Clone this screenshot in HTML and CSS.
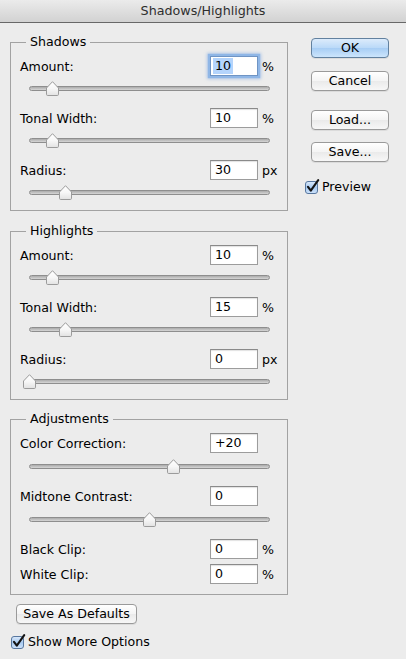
FILE: index.html
```html
<!DOCTYPE html>
<html>
<head>
<meta charset="utf-8">
<title>Shadows/Highlights</title>
<link rel="stylesheet" href="styles.css">
</head>
<body>
<svg class="defs" width="0" height="0" aria-hidden="true">
  <defs>
    <linearGradient id="thumbGrad" x1="0" y1="0" x2="0" y2="1">
      <stop offset="0" stop-color="#ffffff"/>
      <stop offset="0.5" stop-color="#f7f7f7"/>
      <stop offset="1" stop-color="#e2e2e2"/>
    </linearGradient>
    <linearGradient id="checkGrad" x1="0" y1="0" x2="0" y2="1">
      <stop offset="0" stop-color="#dbe9fa"/>
      <stop offset="0.5" stop-color="#a9cbf1"/>
      <stop offset="1" stop-color="#cfe3fb"/>
    </linearGradient>
  </defs>
</svg>
<div class="window">
  <div class="titlebar">Shadows/Highlights</div>
  <div class="content">
    <div class="left">
      <fieldset class="group g-shadows">
        <legend>Shadows</legend>
        <div class="setting">
          <div class="field-row"><span class="label">Amount:</span><span class="input focus"><span class="sel">10</span></span><span class="unit">%</span></div>
          <div class="slider"><div class="track"></div><svg class="thumb" style="left:17px" width="13" height="15" viewBox="0 0 13 15"><path d="M0.5 7 L6.5 0.7 L12.5 7 V13.3 Q12.5 14.5 11.3 14.5 H1.7 Q0.5 14.5 0.5 13.3 Z" fill="url(#thumbGrad)" stroke="#9b9b9b"/></svg></div>
        </div>
        <div class="setting">
          <div class="field-row"><span class="label">Tonal Width:</span><span class="input">10</span><span class="unit">%</span></div>
          <div class="slider"><div class="track"></div><svg class="thumb" style="left:17px" width="13" height="15" viewBox="0 0 13 15"><path d="M0.5 7 L6.5 0.7 L12.5 7 V13.3 Q12.5 14.5 11.3 14.5 H1.7 Q0.5 14.5 0.5 13.3 Z" fill="url(#thumbGrad)" stroke="#9b9b9b"/></svg></div>
        </div>
        <div class="setting">
          <div class="field-row"><span class="label">Radius:</span><span class="input">30</span><span class="unit">px</span></div>
          <div class="slider"><div class="track"></div><svg class="thumb" style="left:30px" width="13" height="15" viewBox="0 0 13 15"><path d="M0.5 7 L6.5 0.7 L12.5 7 V13.3 Q12.5 14.5 11.3 14.5 H1.7 Q0.5 14.5 0.5 13.3 Z" fill="url(#thumbGrad)" stroke="#9b9b9b"/></svg></div>
        </div>
      </fieldset>

      <fieldset class="group g-highlights">
        <legend>Highlights</legend>
        <div class="setting">
          <div class="field-row"><span class="label">Amount:</span><span class="input">10</span><span class="unit">%</span></div>
          <div class="slider"><div class="track"></div><svg class="thumb" style="left:17px" width="13" height="15" viewBox="0 0 13 15"><path d="M0.5 7 L6.5 0.7 L12.5 7 V13.3 Q12.5 14.5 11.3 14.5 H1.7 Q0.5 14.5 0.5 13.3 Z" fill="url(#thumbGrad)" stroke="#9b9b9b"/></svg></div>
        </div>
        <div class="setting">
          <div class="field-row"><span class="label">Tonal Width:</span><span class="input">15</span><span class="unit">%</span></div>
          <div class="slider"><div class="track"></div><svg class="thumb" style="left:30px" width="13" height="15" viewBox="0 0 13 15"><path d="M0.5 7 L6.5 0.7 L12.5 7 V13.3 Q12.5 14.5 11.3 14.5 H1.7 Q0.5 14.5 0.5 13.3 Z" fill="url(#thumbGrad)" stroke="#9b9b9b"/></svg></div>
        </div>
        <div class="setting">
          <div class="field-row"><span class="label">Radius:</span><span class="input">0</span><span class="unit">px</span></div>
          <div class="slider"><div class="track"></div><svg class="thumb" style="left:-6px" width="13" height="15" viewBox="0 0 13 15"><path d="M0.5 7 L6.5 0.7 L12.5 7 V13.3 Q12.5 14.5 11.3 14.5 H1.7 Q0.5 14.5 0.5 13.3 Z" fill="url(#thumbGrad)" stroke="#9b9b9b"/></svg></div>
        </div>
      </fieldset>

      <fieldset class="group g-adjust">
        <legend>Adjustments</legend>
        <div class="setting">
          <div class="field-row"><span class="label">Color Correction:</span><span class="input">+20</span></div>
          <div class="slider"><div class="track"></div><svg class="thumb" style="left:138px" width="13" height="15" viewBox="0 0 13 15"><path d="M0.5 7 L6.5 0.7 L12.5 7 V13.3 Q12.5 14.5 11.3 14.5 H1.7 Q0.5 14.5 0.5 13.3 Z" fill="url(#thumbGrad)" stroke="#9b9b9b"/></svg></div>
        </div>
        <div class="setting">
          <div class="field-row"><span class="label">Midtone Contrast:</span><span class="input">0</span></div>
          <div class="slider"><div class="track"></div><svg class="thumb" style="left:114px" width="13" height="15" viewBox="0 0 13 15"><path d="M0.5 7 L6.5 0.7 L12.5 7 V13.3 Q12.5 14.5 11.3 14.5 H1.7 Q0.5 14.5 0.5 13.3 Z" fill="url(#thumbGrad)" stroke="#9b9b9b"/></svg></div>
        </div>
        <div class="clips">
          <div class="field-row"><span class="label">Black Clip:</span><span class="input">0</span><span class="unit">%</span></div>
          <div class="field-row"><span class="label">White Clip:</span><span class="input">0</span><span class="unit">%</span></div>
        </div>
      </fieldset>

      <button class="btn wide">Save As Defaults</button>
      <div class="check more">
        <svg width="15" height="15" viewBox="0 0 15 15"><rect x="0.5" y="2.5" width="12" height="12" rx="2.5" fill="url(#checkGrad)" stroke="#58779f"/><path d="M3 7.8 L5.8 11.6 L13.2 1.2" fill="none" stroke="#141414" stroke-width="2.1" stroke-linecap="round" stroke-linejoin="round"/></svg>
        <span>Show More Options</span>
      </div>
    </div>

    <div class="right">
      <button class="btn default">OK</button>
      <button class="btn b-cancel">Cancel</button>
      <button class="btn b-load">Load...</button>
      <button class="btn b-save">Save...</button>
      <div class="check preview">
        <svg width="15" height="15" viewBox="0 0 15 15"><rect x="0.5" y="2.5" width="12" height="12" rx="2.5" fill="url(#checkGrad)" stroke="#58779f"/><path d="M3 7.8 L5.8 11.6 L13.2 1.2" fill="none" stroke="#141414" stroke-width="2.1" stroke-linecap="round" stroke-linejoin="round"/></svg>
        <span>Preview</span>
      </div>
    </div>
  </div>
</div>
</body>
</html>
```
FILE: styles.css
```css
* { box-sizing: border-box; }
html, body { margin: 0; padding: 0; }
body {
  width: 406px;
  height: 659px;
  overflow: hidden;
  background: #ececec;
  font-family: "DejaVu Sans", "Noto Sans", sans-serif;
  font-size: 12.6px;
  color: #000;
}
.defs { display: block; width: 0; height: 0; }

.window { height: 659px; display: flex; flex-direction: column; }

.titlebar {
  height: 23px;
  line-height: 22px;
  text-align: center;
  color: #2e2e2e;
  font-size: 12.7px;
  background: linear-gradient(#ebebeb, #d2d2d2);
  border-bottom: 1px solid #686868;
}

.content { display: flex; padding: 11px 0 0 10px; }
.left { width: 278px; }
.right {
  width: 84px;
  margin-left: 17px;
  padding-top: 4px;
  display: flex;
  flex-direction: column;
  align-items: flex-start;
}

/* group boxes */
.group {
  margin: 0;
  padding: 6px 9px 10px 9px;
  border: 1px solid #a2a2a2;
  min-width: 0;
}
.group legend {
  padding: 0 4px;
  margin-left: 6px;
  line-height: 16px;
}
.g-highlights { margin-top: 12px; }
.g-adjust { margin-top: 11px; }

.setting + .setting { margin-top: 12px; }

.field-row {
  display: flex;
  align-items: center;
  height: 20px;
}
.label { width: 190px; flex: none; }
.input {
  width: 48px;
  height: 20px;
  flex: none;
  padding-left: 4px;
  line-height: 18px;
  background: #fff;
  border: 1px solid #9c9c9c;
  border-top-color: #8a8a8a;
  box-shadow: inset 0 1px 1px rgba(0, 0, 0, 0.12);
}
.input.focus {
  box-shadow: 0 0 1px 2px #8fb6e6, 0 0 3px 3px rgba(120, 165, 225, 0.55);
  border-color: #6f94c4;
}
.sel {
  display: inline-block;
  margin-left: -2px;
  padding: 0 2px 0 2px;
  height: 16px;
  line-height: 16px;
  vertical-align: top;
  margin-top: 1px;
  background: #b4d4fc;
}
.unit { margin-left: 4px; flex: none; }

.slider {
  position: relative;
  display: flex;
  align-items: center;
  width: 241px;
  height: 16px;
  margin: 4px 0 0 9px;
}
.track {
  flex: 1;
  height: 5px;
  border-radius: 3px;
  border: 1px solid #8e8e8e;
  background: linear-gradient(#ababab, #d6d6d6);
}
.thumb { position: absolute; top: 1px; }

.g-adjust .slider { margin-top: 5px; }
.clips { margin-top: 12px; display: flex; flex-direction: column; gap: 5px; }

/* buttons */
.btn {
  display: block;
  width: 78px;
  height: 20px;
  margin: 0 0 0 6px;
  padding: 0;
  font: inherit;
  color: #000;
  text-align: center;
  line-height: 18px;
  border: 1px solid #9a9a9a;
  border-radius: 4px;
  background: linear-gradient(#ffffff, #f4f4f4 50%, #eaeaea 51%, #f7f7f7);
  box-shadow: 0 1px 0 rgba(0, 0, 0, 0.07);
}
.btn.default {
  border-color: #62819f;
  background: linear-gradient(#dcebfb, #bad9f8 50%, #a7cdf4 51%, #cce5fc);
}
.b-cancel { margin-top: 13px; }
.b-load { margin-top: 19px; }
.b-save { margin-top: 12px; }
.btn.wide { width: 121px; margin: 9px 0 0 6px; }

.check {
  display: flex;
  align-items: center;
  height: 15px;
  gap: 2px;
}
.check svg { flex: none; display: block; }
.preview { margin-top: 17px; }
.more { margin: 10px 0 0 1px; }
```
